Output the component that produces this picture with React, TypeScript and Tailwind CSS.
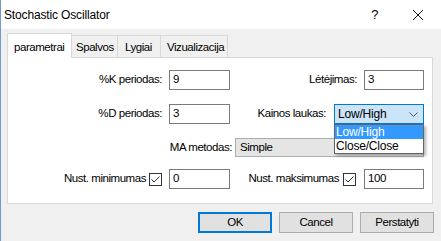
import React from "react"

const Check = () => (
    <div className="w-[13px] h-[13px] border border-[#333333] bg-white flex items-center justify-center">
        <svg width="11" height="11" viewBox="0 0 11 11">
            <path d="M1.5 5.5 L4 8 L9.5 2.5" fill="none" stroke="#333333" strokeWidth="1" />
        </svg>
    </div>
)

const Field = ({ value, className }: { value: string; className: string }) => (
    <div className={`h-[20px] border border-[#7a7a7a] bg-white pl-[3px] flex items-center ${className}`}>
        {value}
    </div>
)

export default function App() {
    return (
        <div className="w-[441px] h-[241px] bg-[#f0f0f0] border-l border-[#6d9ccf] flex flex-col font-['Liberation_Sans',Arial,sans-serif] text-[11.5px] tracking-[-0.45px] text-black overflow-hidden">
            <div className="h-[29px] bg-white flex items-center pl-[3px] shrink-0">
                <span className="text-[12px] tracking-[-0.15px]">Stochastic Oscillator</span>
                <span className="ml-auto text-[13px] mr-[34px]">?</span>
                <svg width="12" height="12" viewBox="0 0 12 12" className="mr-[17px]">
                    <path d="M1 1 L11 11 M11 1 L1 11" stroke="#111" strokeWidth="1" />
                </svg>
            </div>

            <div className="pt-[4px] pl-[6px] pr-[7px] flex flex-col">
                <div className="h-[24px] flex items-end">
                    <div className="relative z-10 -mb-px h-[25px] w-[65px] bg-white border border-b-0 border-[#d9d9d9] pl-[6px] pt-[5px]">parametrai</div>
                    <div className="h-[22px] w-[46px] border-t border-r border-[#d9d9d9] pl-[4px] pt-[3px]">Spalvos</div>
                    <div className="h-[22px] w-[43px] border-t border-r border-[#d9d9d9] pl-[7px] pt-[3px]">Lygiai</div>
                    <div className="h-[22px] w-[67px] border-t border-r border-[#d9d9d9] pl-[6px] pt-[3px]">Vizualizacija</div>
                </div>

                <div className="w-[426px] h-[147px] bg-white border border-[#d9d9d9] pt-[12px] flex flex-col">
                    <div className="flex items-center h-[20px]">
                        <div className="w-[154px] text-right">%K periodas:</div>
                        <Field value="9" className="ml-[7px] w-[61px]" />
                        <div className="w-[127px] text-right">Lėtėjimas:</div>
                        <Field value="3" className="ml-[7px] w-[60px]" />
                    </div>

                    <div className="flex items-center h-[20px] mt-[14px]">
                        <div className="w-[154px] text-right">%D periodas:</div>
                        <Field value="3" className="ml-[7px] w-[61px]" />
                        <div className="w-[96px] text-right">Kainos laukas:</div>
                        <div className="relative ml-[8px] w-[90px] h-[20px]">
                            <div className="h-full border border-[#0078d7] bg-[#cce4f7] pl-[3px] pr-[5px] flex items-center">
                                <span className="text-[12px] tracking-[-0.2px]">Low/High</span>
                                <svg width="9" height="5" viewBox="0 0 9 5" className="ml-auto">
                                    <path d="M0.5 0.5 L4.5 4.5 L8.5 0.5" fill="none" stroke="#555" strokeWidth="1" />
                                </svg>
                            </div>
                            <div className="absolute left-0 top-[20px] w-[90px] border border-[#646464] bg-white shadow-[2px_2px_3px_rgba(0,0,0,0.3)] z-20 text-[12px] tracking-[-0.2px]">
                                <div className="h-[14px] bg-[#3399ff] text-white pl-[1px] flex items-center">Low/High</div>
                                <div className="h-[14px] pl-[1px] flex items-center">Close/Close</div>
                            </div>
                        </div>
                    </div>

                    <div className="flex items-center h-[19px] mt-[14px]">
                        <div className="w-[224px] text-right">MA metodas:</div>
                        <div className="ml-[3px] w-[189px] h-[19px] border border-[#adadad] bg-[#e5e5e5] pl-[4px] flex items-center">Simple</div>
                    </div>

                    <div className="flex items-center h-[20px] mt-[12px]">
                        <div className="w-[138px] text-right">Nust. minimumas</div>
                        <div className="ml-[3px]"><Check /></div>
                        <Field value="0" className="ml-[7px] w-[61px]" />
                        <div className="w-[109px] text-right">Nust. maksimumas</div>
                        <div className="ml-[4px]"><Check /></div>
                        <Field value="100" className="ml-[8px] w-[60px]" />
                    </div>
                </div>

                <div className="mt-[8px] flex justify-end gap-[7px]">
                    <button className="w-[74px] h-[21px] border-2 border-[#0078d7] bg-[#e1e1e1]">OK</button>
                    <button className="w-[74px] h-[21px] border border-[#adadad] bg-[#e1e1e1]">Cancel</button>
                    <button className="w-[74px] h-[21px] border border-[#adadad] bg-[#e1e1e1]">Perstatyti</button>
                </div>
            </div>
        </div>
    )
}
